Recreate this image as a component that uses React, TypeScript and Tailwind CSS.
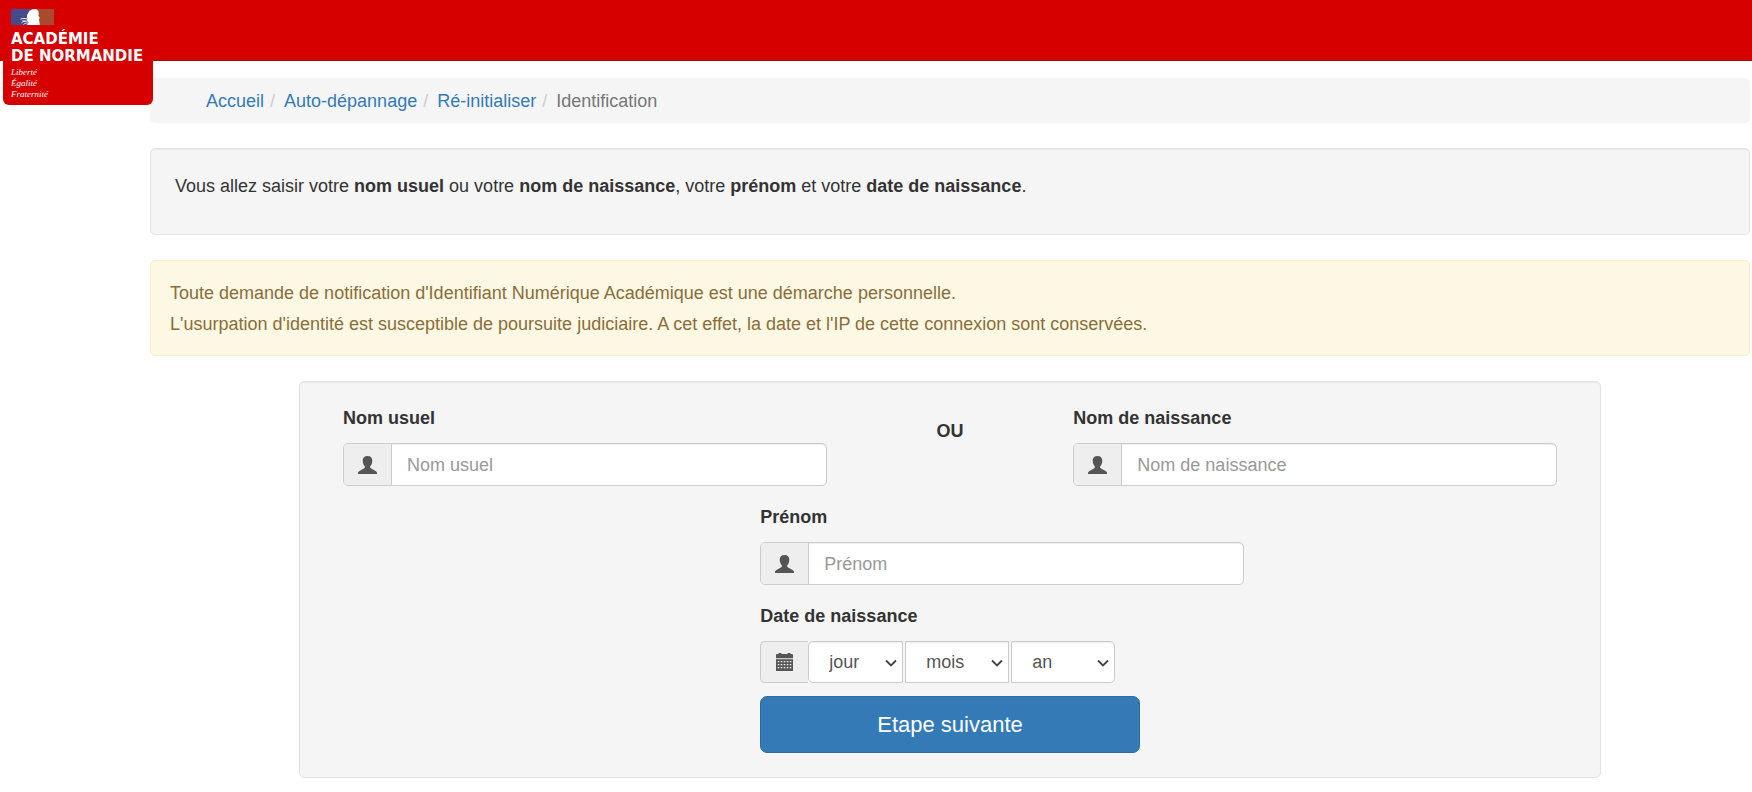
import { ChevronDown } from "lucide-react";
import type { ReactNode } from "react";

function FlagEmblem() {
  return (
    <svg width="43" height="16" viewBox="0 0 43 16" aria-hidden="true">
      <rect width="21" height="16" fill="#454a8c" />
      <rect x="21" width="22" height="16" fill="#a94a2e" />
      <path
        d="M18.500 1.800 21 .5 25 0 27.200 1.800 27.800 4.500 27.400 6.400 28.800 9.300 27.900 10.200 28.300 12 28.600 14 28.800 16H15.500c1.400-.8 2-1.800 2-3L16 11.800 16.600 10 15.800 8.600 16.300 5.500Z"
        fill="#fff"
      />
      <path
        d="M9.500 10.200c2.200-1.100 4.600-1 7.500.2M10.500 13.800c1.800-1.800 3.500-2 6-1.500M12.500 15.500c1-1 2.500-1.500 4.500-1.500M11.500 11.800l3 .6"
        stroke="#fff"
        strokeWidth=".9"
        fill="none"
      />
    </svg>
  );
}

function UserIcon() {
  return (
    <svg width="19" height="18" viewBox="0 0 19 18" fill="#555" aria-hidden="true">
      <path d="M9.500 0C6.400 0 4.700 1.700 4.700 4.600c0 1.500.2 2.700.8 3.800.4.800.9 1.300 1.200 1.900.3.700.3 1.500-.4 2L1.500 14.900C.5 15.500 0 16 0 17v1h19v-1c0-1-.5-1.500-1.500-2.100L12.700 12.300c-.7-.5-.7-1.300-.4-2 .3-.6.800-1.100 1.200-1.900.6-1.100.8-2.300.8-3.800C14.300 1.700 12.600 0 9.500 0Z" />
    </svg>
  );
}

function CalendarIcon() {
  const columns = [2, 5, 8, 11, 14];
  const rows = [8, 11, 14];
  return (
    <svg width="17" height="18" viewBox="0 0 17 18" aria-hidden="true">
      <path
        d="M0 5.200V2.200C0 1.500.5 1 1.200 1H2.500V.6c0-.4.3-.6.600-.6h1.800c.4 0 .6.2.6.6V1h6V.6c0-.4.2-.6.6-.6h1.800c.3 0 .6.2.6.6V1h1.300c.7 0 1.200.5 1.200 1.200v3ZM0 6.300h17V18H0Z"
        fill="#555"
      />
      {rows.map((y) =>
        columns.map((x) => (
          <rect key={`${x}-${y}`} x={x - 0.3} y={y} width="1.600" height="1.300" fill="#eee" />
        )),
      )}
    </svg>
  );
}

function TextField({ id, label }: { id: string; label: string }) {
  return (
    <div>
      <label htmlFor={id} className="block font-bold">
        {label}
      </label>
      <div className="mt-3 flex h-[43px] rounded-[5px] border border-[#ccc] bg-white">
        <span className="flex w-12 shrink-0 items-center justify-center rounded-l-[4px] border-r border-[#ccc] bg-[#eee]">
          <UserIcon />
        </span>
        <input
          id={id}
          type="text"
          placeholder={label}
          className="min-w-0 flex-1 rounded-r-[4px] px-[15px] pt-px text-[#555] shadow-[inset_0_1px_1px_rgba(0,0,0,0.075)] outline-none placeholder:text-[#999]"
        />
      </div>
    </div>
  );
}

function DateSelect({
  label,
  options,
  className,
}: {
  label: string;
  options: string[];
  className: string;
}) {
  return (
    <span className="relative flex">
      <select
        aria-label={label}
        className={`h-[42px] appearance-none border border-[#ccc] bg-white px-5 text-[#555] shadow-[inset_0_1px_1px_rgba(0,0,0,0.075)] outline-none ${className}`}
      >
        <option>{label}</option>
        {options.map((option) => (
          <option key={option}>{option}</option>
        ))}
      </select>
      <ChevronDown
        className="pointer-events-none absolute top-3 right-[2px] size-5 text-[#444]"
        strokeWidth={2.2}
        strokeLinecap="butt"
        strokeLinejoin="miter"
        aria-hidden="true"
      />
    </span>
  );
}

function Crumb({ children }: { children: ReactNode }) {
  return (
    <li className="flex">
      <a href="#" className="text-[#337ab7]">
        {children}
      </a>
      <span className="pr-[9px] pl-[6px] text-[#ccc]" aria-hidden="true">
        /
      </span>
    </li>
  );
}

const range = (from: number, to: number) =>
  Array.from({ length: to - from + 1 }, (_, i) => String(from + i));

export default function App() {
  return (
    <div className="bg-white font-['Liberation_Sans',Arial,sans-serif] text-[18px] leading-[25px] text-[#333]">
      <header className="relative h-[61px] border-b border-[#a30f0f] bg-[#d60000]">
        <a
          href="#"
          className="absolute top-0 left-[3px] flex h-[105px] w-[150px] flex-col rounded-b-[6px] bg-[#d60000] pt-[9px] pl-2 text-white"
        >
          <FlagEmblem />
          <span className="mt-[6px] font-['DejaVu_Sans',sans-serif] text-[15px] leading-[17px] font-bold whitespace-nowrap">
            ACADÉMIE
            <br />
            DE NORMANDIE
          </span>
          <span className="mt-[2px] font-['Liberation_Serif',serif] text-[9px] leading-[11px] italic">
            Liberté
            <br />
            Égalité
            <br />
            Fraternité
          </span>
        </a>
      </header>

      <main className="mr-[2px] ml-[150px] flex flex-col gap-[25px] pt-[17px]">
        <nav aria-label="Fil d'Ariane" className="rounded-[5px] bg-[#f5f5f5] pt-[11px] pb-[9px] pl-14">
          <ol className="flex">
            <Crumb>Accueil</Crumb>
            <Crumb>Auto-dépannage</Crumb>
            <Crumb>Ré-initialiser</Crumb>
            <li className="text-[#777]">Identification</li>
          </ol>
        </nav>

        <section className="rounded-[5px] border border-[#e3e3e3] bg-[#f5f5f5] px-6 pt-[25px] pb-[35px] shadow-[inset_0_1px_1px_rgba(0,0,0,0.05)]">
          <p>
            Vous allez saisir votre <strong>nom usuel</strong> ou votre{" "}
            <strong>nom de naissance</strong>, votre <strong>prénom</strong> et votre{" "}
            <strong>date de naissance</strong>.
          </p>
        </section>

        <section className="rounded-[5px] border border-[#faebcc] bg-[#fcf8e3] px-[19px] pt-[17px] pb-[15px] leading-[31px] text-[#8a6d3b]">
          <p>Toute demande de notification d'Identifiant Numérique Académique est une démarche personnelle.</p>
          <p>
            L'usurpation d'identité est susceptible de poursuite judiciaire. A cet effet, la date et l'IP de cette
            connexion sont conservées.
          </p>
        </section>

        <form className="mx-[149px] grid grid-cols-12 rounded-[5px] border border-[#e3e3e3] bg-[#f5f5f5] p-6 shadow-[inset_0_1px_1px_rgba(0,0,0,0.05)]">
          <div className="col-span-5 px-[19px]">
            <TextField id="nom-usuel" label="Nom usuel" />
          </div>
          <div className="col-span-2 pt-[13px] text-center font-bold">OU</div>
          <div className="col-span-5 px-[19px]">
            <TextField id="nom-naissance" label="Nom de naissance" />
          </div>

          <div className="col-span-5 col-start-5 mt-[19px] px-[19px]">
            <TextField id="prenom" label="Prénom" />
          </div>

          <fieldset className="col-span-8 col-start-5 mt-[19px] px-[19px]">
            <legend className="font-bold">Date de naissance</legend>
            <div className="mt-3 flex">
              <span className="flex h-[42px] w-12 items-center justify-center rounded-l-[5px] border border-r-0 border-[#ccc] bg-[#eee]">
                <CalendarIcon />
              </span>
              <div className="flex gap-[2px]">
                <DateSelect label="jour" options={range(1, 31)} className="w-[95px] rounded-l-[5px]" />
                <DateSelect label="mois" options={range(1, 12)} className="w-[104px]" />
                <DateSelect label="an" options={range(1930, 2020)} className="w-[104px] rounded-r-[5px]" />
              </div>
            </div>
          </fieldset>

          <div className="col-span-4 col-start-5 mt-[13px] px-[19px]">
            <button
              type="submit"
              className="h-[57px] w-full rounded-[7px] border border-[#2e6da4] bg-[#337ab7] text-[22px] text-white"
            >
              Etape suivante
            </button>
          </div>
        </form>
      </main>
    </div>
  );
}
